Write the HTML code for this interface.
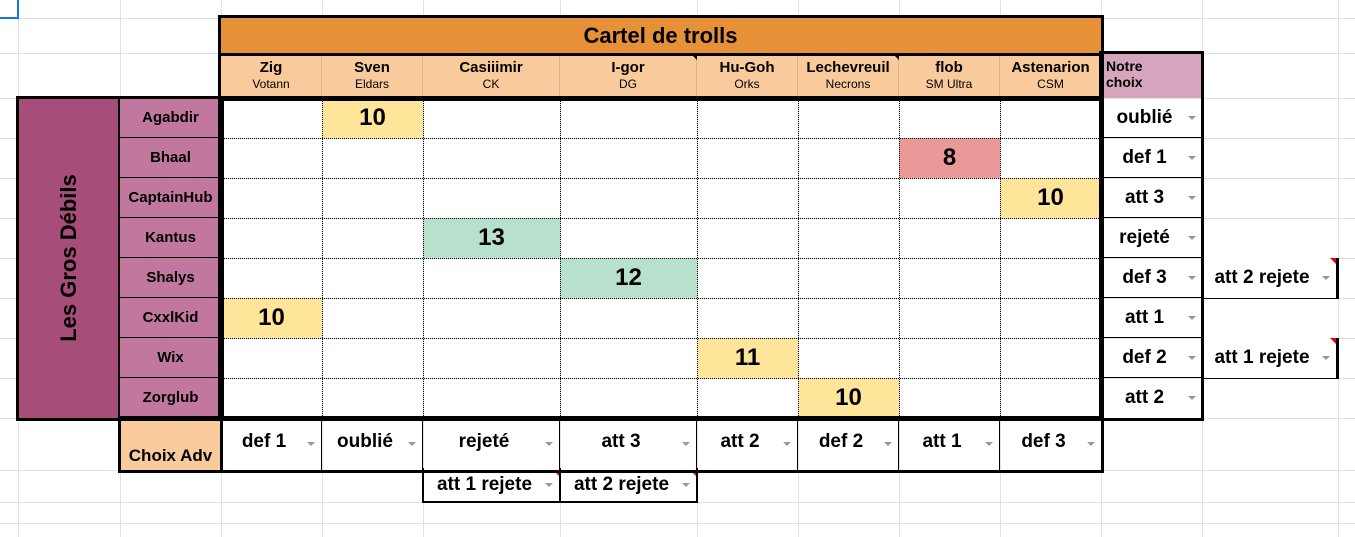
<!DOCTYPE html>
<html><head><meta charset="utf-8"><style>
body{margin:0;width:1355px;height:537px;background:#fff;position:relative;overflow:hidden;font-family:"Liberation Sans",Arial,sans-serif;}
div{position:absolute;box-sizing:border-box;}
.gv{top:0;height:537px;width:1px;background:#e2e2e2}
.gh{left:0;width:1355px;height:1px;background:#e2e2e2}
.dv{width:0;border-left:1px dotted #000;top:98px;height:320px}
.dh{height:0;border-top:1px dotted #000;left:221px;width:880px}
.c{display:flex;align-items:center;justify-content:center;font-weight:bold;color:#000}
.n{font-size:24px}
.h{background:#f9cb9c;flex-direction:column;top:53px;height:45px;border-right:1px solid #e0b088}
.h b{font-size:15px;line-height:18px}
.h span{font-size:12px;font-weight:normal;line-height:15px}
.p{left:120px;width:101px;height:40px;background:#c2789e;border-bottom:1px solid #000;font-size:15px}
.d{font-size:19px;padding-right:14px}
.d:after{content:"";position:absolute;right:6px;top:50%;margin-top:-2px;border-left:4px solid transparent;border-right:4px solid transparent;border-top:4px solid #999}
.tri{width:0;height:0;border-top:6px solid #e00;border-left:6px solid transparent}
.tk{border-top:6px solid #000;border-left:6px solid transparent}
</style></head><body>
<div class="gv" style="left:18px"></div><div class="gv" style="left:120px"></div><div class="gv" style="left:221px"></div><div class="gv" style="left:322px"></div><div class="gv" style="left:423px"></div><div class="gv" style="left:560px"></div><div class="gv" style="left:697px"></div><div class="gv" style="left:798px"></div><div class="gv" style="left:899px"></div><div class="gv" style="left:1000px"></div><div class="gv" style="left:1101px"></div><div class="gv" style="left:1202px"></div><div class="gv" style="left:1338px"></div>
<div class="gh" style="top:18px"></div><div class="gh" style="top:53px"></div><div class="gh" style="top:98px"></div><div class="gh" style="top:138px"></div><div class="gh" style="top:178px"></div><div class="gh" style="top:218px"></div><div class="gh" style="top:258px"></div><div class="gh" style="top:298px"></div><div class="gh" style="top:338px"></div><div class="gh" style="top:378px"></div><div class="gh" style="top:418px"></div><div class="gh" style="top:470px"></div><div class="gh" style="top:502px"></div><div class="gh" style="top:523px"></div>
<div style="left:0;top:0;width:19px;height:19px;border-right:2px solid #1a73e8;border-bottom:2px solid #1a73e8;background:#fff"></div>

<div class="c" style="left:220px;top:17px;width:881px;height:37px;background:#e69138;font-size:22px">Cartel de trolls</div>
<div class="c h" style="left:221px;width:101px"><b>Zig</b><span>Votann</span></div>
<div class="c h" style="left:322px;width:101px"><b>Sven</b><span>Eldars</span></div>
<div class="c h" style="left:423px;width:137px"><b>Casiiimir</b><span>CK</span></div>
<div class="c h" style="left:560px;width:137px"><b>I-gor</b><span>DG</span></div>
<div class="c h" style="left:697px;width:101px"><b>Hu-Goh</b><span>Orks</span></div>
<div class="c h" style="left:798px;width:101px"><b>Lechevreuil</b><span>Necrons</span></div>
<div class="c h" style="left:899px;width:101px"><b>flob</b><span>SM Ultra</span></div>
<div class="c h" style="left:1000px;width:101px;border-right:none"><b>Astenarion</b><span>CSM</span></div>
<div class="tri tk" style="left:691px;top:54px"></div><div class="tri tk" style="left:893px;top:54px"></div>
<div style="left:1101px;top:53px;width:101px;height:45px;background:#d5a6bd;font-weight:bold;font-size:14px;line-height:16px;padding:5px 0 0 5px">Notre<br>choix</div>

<div class="c n" style="left:322px;top:98px;width:101px;height:40px;background:#ffe599">10</div>
<div class="c n" style="left:899px;top:138px;width:101px;height:40px;background:#ea9999">8</div>
<div class="c n" style="left:1000px;top:178px;width:101px;height:40px;background:#ffe599">10</div>
<div class="c n" style="left:423px;top:218px;width:137px;height:40px;background:#b7e1cd">13</div>
<div class="c n" style="left:560px;top:258px;width:137px;height:40px;background:#b7e1cd">12</div>
<div class="c n" style="left:221px;top:298px;width:101px;height:40px;background:#ffe599">10</div>
<div class="c n" style="left:697px;top:338px;width:101px;height:40px;background:#ffe599">11</div>
<div class="c n" style="left:798px;top:378px;width:101px;height:40px;background:#ffe599">10</div>

<div class="dv" style="left:322px"></div><div class="dv" style="left:423px"></div><div class="dv" style="left:560px"></div><div class="dv" style="left:697px"></div><div class="dv" style="left:798px"></div><div class="dv" style="left:899px"></div><div class="dv" style="left:1000px"></div>
<div class="dh" style="top:138px"></div><div class="dh" style="top:178px"></div><div class="dh" style="top:218px"></div><div class="dh" style="top:258px"></div><div class="dh" style="top:298px"></div><div class="dh" style="top:338px"></div><div class="dh" style="top:378px"></div>

<div style="left:18px;top:98px;width:102px;height:320px;background:#a64d79"></div>
<div class="c" style="left:18px;top:98px;width:102px;height:320px;"><div style="position:static;transform:rotate(-90deg);white-space:nowrap;font-size:22px;font-weight:bold">Les Gros Débils</div></div>
<div class="c p" style="top:98px">Agabdir</div>
<div class="c p" style="top:138px">Bhaal</div>
<div class="c p" style="top:178px">CaptainHub</div>
<div class="c p" style="top:218px">Kantus</div>
<div class="c p" style="top:258px">Shalys</div>
<div class="c p" style="top:298px">CxxlKid</div>
<div class="c p" style="top:338px">Wix</div>
<div class="c p" style="top:378px">Zorglub</div>

<div class="c d" style="left:1101px;top:98px;width:101px;height:40px;border-bottom:1px solid #000">oublié</div>
<div class="c d" style="left:1101px;top:138px;width:101px;height:40px;border-bottom:1px solid #000">def 1</div>
<div class="c d" style="left:1101px;top:178px;width:101px;height:40px;border-bottom:1px solid #000">att 3</div>
<div class="c d" style="left:1101px;top:218px;width:101px;height:40px;border-bottom:1px solid #000">rejeté</div>
<div class="c d" style="left:1101px;top:258px;width:101px;height:40px;border-bottom:1px solid #000">def 3</div>
<div class="c d" style="left:1101px;top:298px;width:101px;height:40px;border-bottom:1px solid #000">att 1</div>
<div class="c d" style="left:1101px;top:338px;width:101px;height:40px;border-bottom:1px solid #000">def 2</div>
<div class="c d" style="left:1101px;top:378px;width:101px;height:40px">att 2</div>
<div class="c d" style="left:1202px;top:258px;width:137px;height:41px;border-bottom:1px solid #000;border-right:3px solid #000;background:#fff">att 2 rejete</div>
<div class="tri" style="left:1330px;top:258px"></div>
<div class="c d" style="left:1202px;top:338px;width:137px;height:41px;border-bottom:1px solid #000;border-right:3px solid #000;background:#fff">att 1 rejete</div>
<div class="tri" style="left:1330px;top:338px"></div>

<div class="c" style="left:120px;top:418px;width:101px;height:52px;background:#f9cb9c;font-size:17px;align-items:flex-end;padding-bottom:4px">Choix Adv</div>
<div class="c d" style="left:221px;top:418px;width:101px;height:52px;border-right:1px solid #000;padding-bottom:4px">def 1</div>
<div class="c d" style="left:322px;top:418px;width:101px;height:52px;border-right:1px solid #000;padding-bottom:4px">oublié</div>
<div class="c d" style="left:423px;top:418px;width:137px;height:52px;border-right:1px solid #000;padding-bottom:4px">rejeté</div>
<div class="c d" style="left:560px;top:418px;width:137px;height:52px;border-right:1px solid #000;padding-bottom:4px">att 3</div>
<div class="c d" style="left:697px;top:418px;width:101px;height:52px;border-right:1px solid #000;padding-bottom:4px">att 2</div>
<div class="c d" style="left:798px;top:418px;width:101px;height:52px;border-right:1px solid #000;padding-bottom:4px">def 2</div>
<div class="c d" style="left:899px;top:418px;width:101px;height:52px;border-right:1px solid #000;padding-bottom:4px">att 1</div>
<div class="c d" style="left:1000px;top:418px;width:101px;height:52px;padding-bottom:4px">def 3</div>
<div class="c d" style="left:422px;top:468px;width:139px;height:35px;border:2px solid #000;border-top:none;background:#fff">att 1 rejete</div>
<div class="tri" style="left:553px;top:470px"></div>
<div class="c d" style="left:559px;top:468px;width:139px;height:35px;border:2px solid #000;border-top:none;background:#fff">att 2 rejete</div>
<div class="tri" style="left:690px;top:470px"></div>

<div style="left:218px;top:15px;width:886px;height:41px;border:3px solid #000"></div>
<div style="left:218px;top:51px;width:886px;height:50px;border:3px solid #000;border-top:none"></div>
<div style="left:1099px;top:51px;width:105px;height:370px;border:3px solid #000"></div>
<div style="left:16px;top:96px;width:208px;height:325px;border:3px solid #000"></div>
<div style="left:118px;top:96px;width:2px;height:324px;background:#000"></div>
<div style="left:218px;top:96px;width:886px;height:325px;border:3px solid #000"></div>
<div style="left:118px;top:416px;width:986px;height:57px;border:3px solid #000"></div>
<div style="left:220px;top:418px;width:3px;height:52px;background:#000"></div>
</body></html>
